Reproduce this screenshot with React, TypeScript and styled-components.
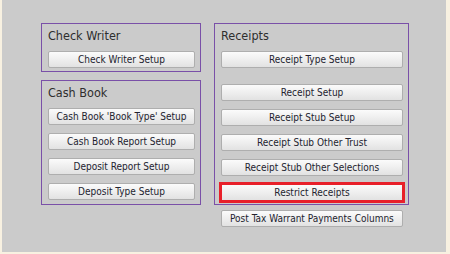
import React from "react";
import styled, { createGlobalStyle } from "styled-components";

const Global = createGlobalStyle`
  html, body { margin: 0; padding: 0; }
  body { background: #f8f1e1; font-family: "DejaVu Sans Condensed", "DejaVu Sans", sans-serif; }
`;

const Frame = styled.div`
  width: 450px;
  height: 254px;
  box-sizing: border-box;
  padding: 0 4px 2px 2px;
  background: #f8f1e1;
`;

const Canvas = styled.div`
  height: 100%;
  background: #cbcbcb;
  box-sizing: border-box;
  padding: 23px 0 0 39px;
  display: flex;
  gap: 13px;
  align-items: flex-start;
`;

const Column = styled.div`
  display: flex;
  flex-direction: column;
  gap: 8px;
`;

const Group = styled.div<{ $w: number; $h: number }>`
  width: ${(p) => p.$w}px;
  height: ${(p) => p.$h}px;
  box-sizing: border-box;
  border: 1px solid #7a50a8;
  padding: 5px 5px 2px 6px;
  display: flex;
  flex-direction: column;
  gap: 8px;
`;

const Title = styled.div`
  font-size: 12.5px;
  line-height: 14px;
  color: #2e2e2e;
`;

const Button = styled.button<{ $highlight?: boolean; $extraTop?: boolean }>`
  height: 17px;
  box-sizing: border-box;
  width: 100%;
  margin: 0;
  margin-top: ${(p) => (p.$extraTop ? "8px" : "0")};
  padding: 0 6px;
  border: 1px solid ${(p) => (p.$highlight ? "#e8202a" : "#aeaeae")};
  outline: ${(p) => (p.$highlight ? "2px solid #e8202a" : "none")};
  border-radius: ${(p) => (p.$highlight ? "0" : "2px")};
  background: linear-gradient(#fbfbfb, #e2e2e2);
  font-family: "DejaVu Sans Condensed", "DejaVu Sans", sans-serif;
  font-size: 10px;
  line-height: 15px;
  color: #23232f;
  text-align: center;
  white-space: nowrap;
`;

const ReceiptsCol = styled.div`
  display: flex;
  flex-direction: column;
  align-items: flex-start;
  gap: 5px;
`;

const LooseButton = styled(Button)`
  width: auto;
  margin-left: 7px;
  padding: 0 8px;
`;

export default function App() {
  return (
    <Frame>
      <Global />
      <Canvas>
        <Column>
          <Group $w={160} $h={49}>
            <Title>Check Writer</Title>
            <Button>Check Writer Setup</Button>
          </Group>
          <Group $w={160} $h={125}>
            <Title>Cash Book</Title>
            <Button>Cash Book 'Book Type' Setup</Button>
            <Button>Cash Book Report Setup</Button>
            <Button>Deposit Report Setup</Button>
            <Button>Deposit Type Setup</Button>
          </Group>
        </Column>
        <ReceiptsCol>
          <Group $w={195} $h={182}>
            <Title>Receipts</Title>
            <Button>Receipt Type Setup</Button>
            <Button $extraTop>Receipt Setup</Button>
            <Button>Receipt Stub Setup</Button>
            <Button>Receipt Stub Other Trust</Button>
            <Button>Receipt Stub Other Selections</Button>
            <Button $highlight>Restrict Receipts</Button>
          </Group>
          <LooseButton>Post Tax Warrant Payments Columns</LooseButton>
        </ReceiptsCol>
      </Canvas>
    </Frame>
  );
}
